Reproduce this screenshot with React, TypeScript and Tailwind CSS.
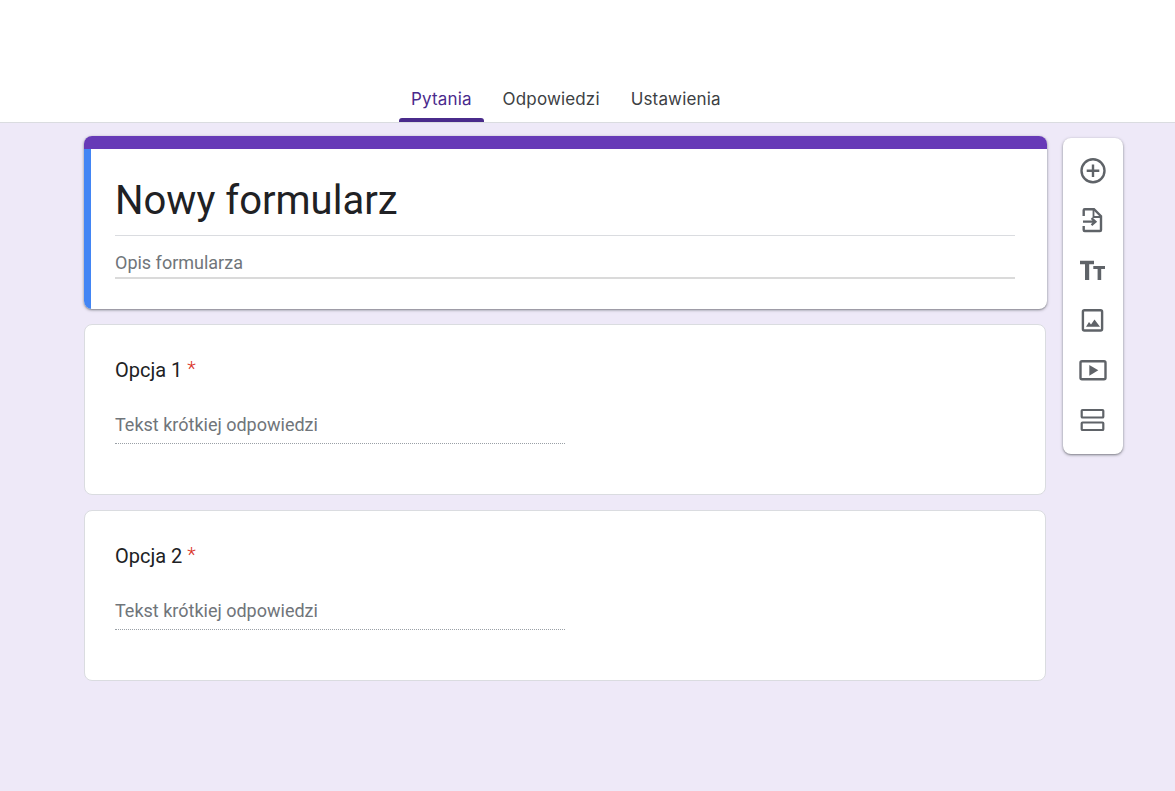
import type { ReactNode } from "react";

const tabs = ["Pytania", "Odpowiedzi", "Ustawienia"];

function ToolIcon({ children }: { children: ReactNode }) {
  return (
    <div className="flex h-[50px] w-full items-center justify-center">
      <svg width="30" height="30" viewBox="0 0 30 30" fill="none" className="text-[#5f6368]">
        {children}
      </svg>
    </div>
  );
}

function Question({ title }: { title: string }) {
  return (
    <div className="h-[171px] w-[962px] rounded-lg border border-[#dadce0] bg-white pl-[30px] pt-[32px]">
      <div className="flex h-[26px] items-start text-[20px] leading-[26px] text-[#202124]">
        <span>{title}</span>
        <span className="ml-[5px] text-[20px] font-light leading-[24px] text-[#d93025]">*</span>
      </div>
      <div className="mt-[30px] h-[31px] w-[450px] border-b border-dotted border-[#9aa0a6] text-[18px] leading-[24px] text-[#70757a]">
        Tekst krótkiej odpowiedzi
      </div>
    </div>
  );
}

export default function App() {
  return (
    <div className="h-[791px] w-[1175px] overflow-hidden bg-[#eee9f8] font-['Roboto',sans-serif]">
      {/* Tabs */}
      <header className="flex h-[123px] items-end border-b border-[#dadce0] bg-white pl-[399px]">
        <nav className="flex gap-[7px] font-['Inter',sans-serif] text-[17px] leading-[24px] tracking-[0.15px]">
          {tabs.map((tab, i) => (
            <div
              key={tab}
              className={`relative flex h-[46px] items-start whitespace-nowrap px-[12px] pt-[11px] ${i === 0 ? "text-[#4a2a8c]" : "text-[#3c4043]"}`}
            >
              {tab}
              {i === 0 && (
                <span className="absolute bottom-0 left-0 right-0 h-[4px] rounded-t-[3px] bg-[#4a2b8b]" />
              )}
            </div>
          ))}
        </nav>
      </header>

      <main className="flex items-start pl-[84px] pt-[13px]">
        <div className="flex w-[963px] flex-col gap-[15px]">
          {/* Form header card */}
          <div className="h-[173px] overflow-hidden rounded-lg bg-white shadow-[0_1px_2px_rgba(60,64,67,0.5),0_1px_3px_1px_rgba(60,64,67,0.15)]">
            <div className="h-[13px] bg-[#673ab7]" />
            <div className="h-[160px] border-l-[7px] border-[#4285f4] pl-[24px] pr-[32px] pt-[25px]">
              <div className="h-[62px] border-b border-[#dadce0] text-[40px] leading-[54px] text-[#202124]">
                Nowy formularz
              </div>
              <div className="h-[43px] border-b-2 border-[#dadada] pt-[15px] text-[18px] leading-[24px] text-[#70757a]">
                Opis formularza
              </div>
            </div>
          </div>
          <Question title="Opcja 1" />
          <Question title="Opcja 2" />
        </div>

        {/* Toolbar */}
        <aside className="ml-[16px] mt-[2px] flex h-[316px] w-[60px] flex-col items-center rounded-lg bg-white pt-[8px] shadow-[0_1px_2px_rgba(60,64,67,0.5),0_1px_3px_1px_rgba(60,64,67,0.15)]">
          <ToolIcon>
            <circle cx="15" cy="14.700" r="11.500" stroke="currentColor" strokeWidth="2.400" />
            <path d="M15 8.500v12.500M8.700 14.700h12.600" stroke="currentColor" strokeWidth="2.400" />
          </ToolIcon>
          <ToolIcon>
            <path
              d="M5.700 10V4.200a1 1 0 0 1 1-1H16l7 7V24a1 1 0 0 1-1 1H6.700a1 1 0 0 1-1-1v-4"
              stroke="currentColor"
              strokeWidth="2.400"
            />
            <path d="M15.500 3.500v7.500h7.500" stroke="currentColor" strokeWidth="1.800" />
            <path d="M5 15.700h12.500M13.500 12.200l4 3.500-4 3.500" stroke="currentColor" strokeWidth="2.200" />
          </ToolIcon>
          <ToolIcon>
            <path d="M2 4.700h14v3.600h-4.800V24H7V8.300H2z" fill="currentColor" />
            <path d="M15.300 10H27v3h-3.800v11h-3.600V13h-4.300z" fill="currentColor" />
          </ToolIcon>
          <ToolIcon>
            <rect x="4.900" y="4.200" width="19.200" height="20.300" rx="1.500" stroke="currentColor" strokeWidth="2.400" />
            <path d="M8 20.700 11 16l2 2.500 3.500-5 5.500 7.200z" fill="currentColor" />
          </ToolIcon>
          <ToolIcon>
            <rect x="2.500" y="5.200" width="25" height="18" rx="1.500" stroke="currentColor" strokeWidth="2.400" />
            <path d="M11.300 9v10.700l9-5.350z" fill="currentColor" />
          </ToolIcon>
          <ToolIcon>
            <rect x="3.700" y="4" width="21.600" height="7.500" rx="0.800" stroke="currentColor" strokeWidth="2.200" />
            <rect x="3.700" y="16.500" width="21.600" height="7.500" rx="0.800" stroke="currentColor" strokeWidth="2.200" />
          </ToolIcon>
        </aside>
      </main>
    </div>
  );
}
